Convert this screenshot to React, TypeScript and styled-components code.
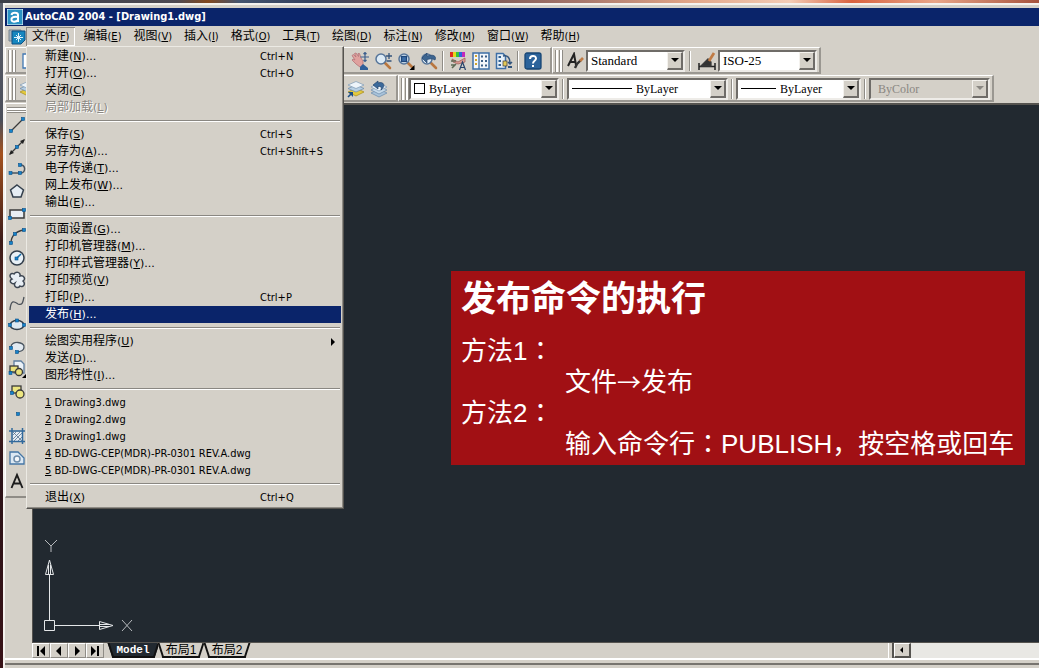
import React from "react";
import styled, { createGlobalStyle } from "styled-components";

const face = "#d4d0c8";
const uiFont = `"DejaVu Sans Condensed", "Noto Sans CJK SC", sans-serif`;

const GlobalStyle = createGlobalStyle`
  * { box-sizing: border-box; }
  body { margin: 0; background: ${face}; font-family: ${uiFont}; font-size: 11px; color: #000; }
  button, select { font: inherit; color: inherit; border: 0; margin: 0; padding: 0; background: none; }
  svg { display: block; flex: none; }
`;

const Desktop = styled.div`
  min-height: 100vh;
  display: flex;
  padding: 3px 0 0 3px;
  background:
    linear-gradient(90deg, #3c3f48 0, #4d4a52 17%, #83481f 20%, #44546f 23%, #33405c 30%, #6b4a4a 42%, #a8786c 56%, #e0a487 66%, #f4cdb6 76%, #d9623f 82%, #e9a689 90%, #a5523d 100%) 0 0 / 100% 3px no-repeat,
    linear-gradient(#5b606c 0, #4b4f5a 18%, #a4521f 23%, #3d1c1a 36%, #642d22 52%, #2c1318 70%, #381217 100%);
`;

const Window = styled.div`
  flex: 1;
  min-width: 0;
  display: flex;
  flex-direction: column;
  background: ${face};
  border-top: 2px solid #f4f2ee;
  border-left: 2px solid #f4f2ee;
  padding-top: 3px;
`;

const TitleBar = styled.header`
  height: 18px;
  display: flex;
  align-items: center;
  gap: 2px;
  padding-left: 2px;
  background: #0a246a;
  color: #fff;
`;

const Title = styled.h1`
  margin: 0;
  font: bold 11px ${uiFont};
  line-height: 18px;
`;

const MenuBar = styled.nav`
  height: 21px;
  display: flex;
  align-items: center;
  padding-left: 3px;
`;

const MenuTitle = styled.button<{ $open?: boolean }>`
  height: 19px;
  padding: 0 6px;
  white-space: nowrap;
  line-height: 19px;
  box-shadow: ${(p) => (p.$open ? "inset 1px 1px #8c8984, inset -1px -1px #fff" : "none")};
`;

const Cjk = styled.span`
  font-size: 12px;
`;

const Access = styled.span``;

const MenuHost = styled.div`
  position: relative;
  margin-right: 2px;
`;

const Menu = styled.div`
  position: absolute;
  z-index: 5;
  top: 19px;
  left: 0;
  width: 318px;
  padding: 1px 2px 2px;
  background: ${face};
  border: 1px solid #eceae4;
  border-right-color: #55534f;
  border-bottom-color: #55534f;
  box-shadow: inset -1px -1px #8f8c86;
  ${Access} { font-family: "DejaVu Sans", sans-serif; }
`;

const MenuRow = styled.button<{ $active?: boolean; $disabled?: boolean }>`
  width: 100%;
  height: 17px;
  display: flex;
  align-items: center;
  padding-left: 16px;
  text-align: left;
  white-space: nowrap;
  line-height: 17px;
  background: ${(p) => (p.$active ? "#0a246a" : "transparent")};
  color: ${(p) => (p.$active ? "#fff" : p.$disabled ? "#8a8782" : "#000")};
  text-shadow: ${(p) => (p.$disabled ? "1px 1px #fff" : "none")};
`;

const RowText = styled.span`
  width: 215px;
`;

const RowKey = styled.span`
  flex: 1;
`;

const MenuLine = styled.hr`
  height: 2px;
  margin: 4px 1px;
  border: 0;
  border-top: 1px solid #8a8782;
  border-bottom: 1px solid #fff;
`;

const BarRow = styled.div`
  height: 28px;
  display: flex;
`;

const Toolbar = styled.div<{ $tail?: number }>`
  height: 27px;
  display: flex;
  align-items: center;
  padding: 1px ${(p) => p.$tail ?? 6}px 0 2px;
  border: 1px solid #fff;
  border-right: 2px solid #9a9791;
  border-bottom: 2px solid #9a9791;
`;

const Grip = styled.span`
  width: 8px;
  height: 22px;
  flex: none;
  border: solid #8f8c86;
  border-width: 0 1px;
  background: linear-gradient(90deg, #fff 0 2px, ${face} 2px 3px, #8f8c86 3px 4px, #fff 4px 6px);
`;

const Rule = styled.span<{ $gap?: number }>`
  width: 2px;
  height: 20px;
  flex: none;
  margin: 0 ${(p) => p.$gap ?? 3}px;
  border-left: 1px solid #8f8c86;
  border-right: 1px solid #fff;
`;

const ToolButton = styled.button`
  width: 23px;
  height: 22px;
  flex: none;
  display: grid;
  place-items: center;
`;

const Covered = styled.div<{ $w: number }>`
  width: ${(p) => p.$w}px;
  display: flex;
  flex: none;
`;

const ComboFrame = styled.div<{ $w: number; $size: number; $off?: boolean }>`
  width: ${(p) => p.$w}px;
  height: 22px;
  flex: none;
  display: flex;
  align-items: center;
  gap: 4px;
  padding: 0 0 0 3px;
  border: 2px solid #6f6c68;
  border-right-color: #eeece8;
  border-bottom-color: #eeece8;
  background: ${(p) => (p.$off ? face : "#fff")};
  color: ${(p) => (p.$off ? "#8a8782" : "#000")};
  font: ${(p) => p.$size}px "Liberation Serif", serif;
`;

const Picker = styled.select`
  flex: 1;
  min-width: 0;
  height: 18px;
  appearance: none;
  opacity: 1;
`;

const DropArrow = styled.span<{ $off?: boolean }>`
  width: 16px;
  height: 18px;
  flex: none;
  display: grid;
  place-items: center;
  background: ${face};
  border: 1px solid #f4f2ee;
  border-right: 2px solid #6f6c68;
  border-bottom: 2px solid #6f6c68;
  &::after {
    content: "";
    border: 4px solid transparent;
    border-top-color: ${(p) => (p.$off ? "#8a8782" : "#000")};
    border-bottom: 0;
  }
`;

const Swatch = styled.span`
  width: 11px;
  height: 11px;
  flex: none;
  border: 1px solid #000;
`;

const LineSample = styled.span<{ $w: number }>`
  width: ${(p) => p.$w}px;
  height: 1px;
  flex: none;
  background: #000;
`;

const Work = styled.div`
  flex: 1;
  display: flex;
`;

const Side = styled.div`
  width: 27px;
  flex: none;
`;

const Palette = styled.div`
  padding: 3px 0 4px;
  display: flex;
  flex-direction: column;
  gap: 1px;
  border: 1px solid #fff;
  border-bottom: 2px solid #8f8c86;
`;

const PaletteGrip = styled.span`
  height: 6px;
  margin: 0 1px;
  border-top: 1px solid #8f8c86;
  border-bottom: 1px solid #8f8c86;
  background: linear-gradient(#fff 0 2px, #8f8c86 2px 3px, #fff 3px);
`;

const PaletteTool = styled.button`
  width: 22px;
  height: 22px;
  display: grid;
  place-items: center;
`;

const View = styled.div`
  flex: 1;
  min-width: 0;
  display: flex;
  flex-direction: column;
`;

const Canvas = styled.main`
  position: relative;
  flex: 1;
  background: #222930;
  border-top: 2px solid #55534f;
  border-left: 1px solid #55534f;
`;

const Ucs = styled.svg`
  position: absolute;
  left: 8px;
  bottom: 8px;
`;

const Callout = styled.section`
  position: absolute;
  top: 166px;
  left: 418px;
  width: 574px;
  padding: 0 10px 5px;
  background: #a11014;
  color: #fff;
  font: 26px "Liberation Sans", "Noto Sans CJK SC", sans-serif;
  line-height: 31px;
  white-space: nowrap;
  h2 { margin: 0; font-size: 35px; font-weight: bold; line-height: 55px; padding-bottom: 10px; }
  p { margin: 0; }
`;

const Step = styled.p`
  && { padding-left: 104px; }
`;

const Colon = styled.span`
  font-family: "Noto Sans CJK TC", sans-serif;
  line-height: 0;
`;

const Arrow = styled.span`
  font-family: "Noto Sans CJK SC", sans-serif;
  font-size: 24px;
  line-height: 0;
`;

const TabStrip = styled.div`
  height: 16px;
  display: flex;
  border-top: 1px solid #55534f;
`;

const NavButton = styled.button`
  width: 18px;
  display: grid;
  place-items: center;
  border: 1px solid #fff;
  border-right-color: #8f8c86;
  border-bottom-color: #8f8c86;
`;

const Tab = styled.button<{ $on?: boolean; $w: number }>`
  position: relative;
  z-index: 0;
  width: ${(p) => p.$w}px;
  height: 15px;
  padding-bottom: 2px;
  line-height: 12px;
  color: ${(p) => (p.$on ? "#fff" : "#000")};
  font-family: ${(p) => (p.$on ? `"Liberation Mono", monospace` : `"Liberation Sans", "Noto Sans CJK SC", sans-serif`)};
  font-size: ${(p) => (p.$on ? 11 : 12)}px;
  font-weight: ${(p) => (p.$on ? "bold" : "normal")};
  &::before, &::after {
    content: "";
    position: absolute;
    z-index: -1;
    inset: 0 35% 0 2px;
    background: ${(p) => (p.$on ? "#222930" : face)};
    border-left: 2px solid #111;
    border-bottom: 2px solid #111;
    transform: skewX(18deg);
  }
  &::after {
    inset: 0 2px 0 35%;
    border-left: 0;
    border-right: 2px solid #111;
    transform: skewX(-18deg);
  }
`;

const Tabs = styled.div`
  flex: 1;
  display: flex;
  padding-left: 4px;
`;

const Scroller = styled.div`
  width: 151px;
  display: flex;
  background: #e9e8e4;
`;

const Splitter = styled.span`
  width: 6px;
  background: ${face};
  border-left: 1px solid #fff;
  border-right: 2px solid #55534f;
`;

const ScrollButton = styled(NavButton)`
  width: 17px;
  background: ${face};
  border-right: 2px solid #55534f;
  border-bottom: 2px solid #55534f;
`;

const CommandEdge = styled.footer`
  height: 10px;
  border-top: 2px solid #fff;
  background: linear-gradient(${face} 0 3px, #77746f 3px 5px, ${face} 5px);
`;

type Entry = { t?: string; l?: string; k?: string; s?: string; sub?: boolean; off?: boolean; on?: boolean };
const groups: Entry[][] = [
  [{ t: "新建", k: "N", s: "Ctrl+N", l: "..." }, { t: "打开", k: "O", s: "Ctrl+O", l: "..." }, { t: "关闭", k: "C" }, { t: "局部加载", k: "L", off: true }],
  [{ t: "保存", k: "S", s: "Ctrl+S" }, { t: "另存为", k: "A", s: "Ctrl+Shift+S", l: "..." }, { t: "电子传递", k: "T", l: "..." }, { t: "网上发布", k: "W", l: "..." }, { t: "输出", k: "E", l: "..." }],
  [{ t: "页面设置", k: "G", l: "..." }, { t: "打印机管理器", k: "M", l: "..." }, { t: "打印样式管理器", k: "Y", l: "..." }, { t: "打印预览", k: "V" }, { t: "打印", k: "P", s: "Ctrl+P", l: "..." }, { t: "发布", k: "H", l: "...", on: true }],
  [{ t: "绘图实用程序", k: "U", sub: true }, { t: "发送", k: "D", l: "..." }, { t: "图形特性", k: "I", l: "..." }],
  [{ k: "1", l: " Drawing3.dwg" }, { k: "2", l: " Drawing2.dwg" }, { k: "3", l: " Drawing1.dwg" }, { k: "4", l: " BD-DWG-CEP(MDR)-PR-0301 REV.A.dwg" }, { k: "5", l: " BD-DWG-CEP(MDR)-PR-0301 REV.A.dwg" }],
  [{ t: "退出", k: "X", s: "Ctrl+Q" }],
];

const menus: [string, string][] = [["编辑", "E"], ["视图", "V"], ["插入", "I"], ["格式", "O"], ["工具", "T"], ["绘图", "D"], ["标注", "N"], ["修改", "M"], ["窗口", "W"], ["帮助", "H"]];

const Label = ({ t, k, l }: Entry) =>
  t ? (
    <><Cjk>{t}</Cjk><Access>(<u>{k}</u>){l}</Access></>
  ) : (
    <><u>{k}</u>{l}</>
  );

const FileMenu = () => (
  <Menu role="menu">
    {groups.map((g, i) => (
      <React.Fragment key={i}>
        {i > 0 && <MenuLine />}
        {g.map((e) => (
          <MenuRow key={e.k} role="menuitem" $active={e.on} $disabled={e.off}>
            <RowText><Label {...e} /></RowText>
            <RowKey>{e.s}</RowKey>
            {e.sub && <svg width="11" height="8"><path d="M1 0L5 4L1 8Z" /></svg>}
          </MenuRow>
        ))}
      </React.Fragment>
    ))}
  </Menu>
);

const Combo = ({ w, label, value, size = 12, off, lead }: { w: number; label: string; value: string; size?: number; off?: boolean; lead?: React.ReactNode }) => (
  <ComboFrame $w={w} $size={size} $off={off}>
    {lead}
    <Picker aria-label={label} disabled={off}><option>{value}</option></Picker>
    <DropArrow $off={off} />
  </ComboFrame>
);

const Icon = ({ children, s = 18 }: { children: React.ReactNode; s?: number }) => (
  <svg width={s} height={s} viewBox="0 0 18 18" fill="none" stroke="#3a3a3a" strokeWidth="1.3">{children}</svg>
);

const dot = (x: number, y: number) => <rect key={`${x}-${y}`} x={x - 1.5} y={y - 1.5} width="3" height="3" fill="#1583c9" stroke="#0a4f8a" strokeWidth=".6" />;

const lens = (
  <>
    <path d="M11 11L16 16" stroke="#b9773f" strokeWidth="2.6" strokeLinecap="round" />
    <circle cx="7" cy="7" r="5" fill="#dceaf5" stroke="#56759a" strokeWidth="1.5" />
  </>
);

const sheets = (
  <>
    <path d="M1 12L9 8L17 12L9 16Z" fill="#e3c93d" stroke="#a58a1c" strokeWidth=".7" />
    <path d="M1 8.500L9 5L17 8.500L9 12Z" fill="#b7cfe3" stroke="#6b8bab" strokeWidth=".7" />
    <path d="M1 5L9 1.500L17 5L9 8.500Z" fill="#edf4fa" stroke="#7c99b5" strokeWidth=".7" />
  </>
);

const blueSheets = (
  <>
    <path d="M1 13L9 9L17 13L9 17Z" fill="#a9c3da" stroke="#6b8bab" strokeWidth=".7" />
    <path d="M1 10L9 6L17 10L9 14Z" fill="#c8dbea" stroke="#6b8bab" strokeWidth=".7" />
    <path d="M1 7L9 3L17 7L9 11Z" fill="#edf4fa" stroke="#7c99b5" strokeWidth=".7" />
  </>
);

const standardTools: [string, React.ReactNode][] = [
  ["平移", <><path d="M1 3.500L2.500 2.500L5 5L3.500 1.500L5 1L7.500 4.500L7 1.500L8.500 1.500L10 6L12 9L12 13L9 15L5 12L1 8L2 7L4 8Z" fill="#dfa19e" stroke="#b47478" strokeWidth=".8" /><path d="M9 15L12 12L17 16V18H9Z" fill="#2e5f9a" stroke="none" /><path d="M14 .5V9.500M9.500 5H18M12.500 2L14 .5L15.500 2M12.500 8L14 9.500L15.500 8" stroke="#3c5f8e" strokeWidth="1.2" /></>],
  ["实时缩放", <>{lens}<path d="M15 1V7M12 4H18M12.500 9H17.500" stroke="#34547c" /></>],
  ["窗口缩放", <>{lens}<rect x="4.500" y="4.500" width="5" height="5" fill="#3d6ea7" stroke="#1f477b" /><path d="M17.500 13V18H12.500Z" fill="#000" stroke="none" /></>],
  ["上一个", <>{lens}<path d="M2 6L7 1V4C13 2 17 4 15 8C12 6 10 7 7 7.500V11Z" fill="#3d6590" stroke="#25466f" strokeWidth=".7" /></>],
];

const dataTools: [string, React.ReactNode][] = [
  ["特性", <><path d="M1 2.500H4" stroke="#e02b22" strokeWidth="5" /><path d="M4 2.500H7" stroke="#e6d51d" strokeWidth="5" /><path d="M7 2.500H10" stroke="#35c13e" strokeWidth="5" /><path d="M10 2.500H13" stroke="#2e62e0" strokeWidth="5" /><path d="M13 2.500H16" stroke="#c328bb" strokeWidth="5" /><path d="M3 7L9 10L16 6V10L9 12L4 10Z" fill="#dd9d94" stroke="#a0605c" strokeWidth=".8" /><path d="M2 9H7M2 13H6M3 16L7 12" stroke="#5c6a55" strokeWidth="1.600" /><path d="M10.500 18L13.500 10L16.500 18M11.500 15.500H15.500" stroke="#28436b" strokeWidth="1.200" /></>],
  ["设计中心", <><rect x="1" y="1" width="16" height="16" fill="#f4f6fa" stroke="#3e6fa6" strokeWidth="1.500" /><path d="M7 1V17" stroke="#3e6fa6" /><path d="M3 4H5M3 8H5M3 12H5" stroke="#d0a42d" strokeWidth="2" /><path d="M9 4.500H11M13 4.500H15M9 9H11M13 9H15M9 13.500H11M13 13.500H15" stroke="#3d5f86" strokeWidth="2.200" /></>],
  ["工具选项板", <><path d="M1.500 1.500H8L10.500 4V16.500H1.500Z" fill="#e7f0f8" stroke="#3e6fa6" strokeWidth="1.500" /><path d="M3.500 5H6M3.500 9H6M3.500 13H6" stroke="#326294" strokeWidth="2.200" /><path d="M8 4C13 3 15 6 15 11M13 10L15 12L17 10" stroke="#31547c" strokeWidth="1.500" /><rect x="8" y="9" width="4" height="5" fill="#e3ca58" strokeWidth=".7" /><path d="M13 15H17" stroke="#31547c" strokeWidth="2" /></>],
];

const palette: [string, React.ReactNode][][] = [
  [
    ["直线", <><path d="M3 15L15 3" />{dot(3, 15)}{dot(15, 3)}</>],
    ["构造线", <><path d="M2 16L16 2" /><path d="M1 17L3 12L6 15ZM17 1L12 3L15 6Z" fill="#222" stroke="none" />{dot(9, 9)}</>],
    ["多段线", <><path d="M2 13H12M12 5C18 4 18 13 13 13" stroke="#4a5560" strokeWidth="1.500" />{dot(2.500, 13)}{dot(12, 5)}{dot(12, 13)}</>],
    ["正多边形", <path d="M9 3L15.500 8L13 15H5L2.500 8Z" fill="#e6edf3" stroke="#333f4c" strokeWidth="1.500" />],
  ],
  [
    ["矩形", <><rect x="2" y="5" width="14" height="8" fill="#e9eef4" strokeWidth="1.500" />{dot(2, 13)}{dot(16, 5)}</>],
    ["圆弧", <><path d="M3 16C3 9 8 4 16 3" />{dot(3, 16)}{dot(7, 7)}{dot(16, 3)}</>],
    ["圆", <><circle cx="9" cy="9" r="7" fill="#e8f0f6" stroke="#333f4c" strokeWidth="1.500" /><path d="M9 9L13 5" stroke="#176fab" strokeWidth="1.600" />{dot(8.500, 9.500)}</>],
    ["修订云线", <path d="M4 8C0 5 3 1 6 3C8 0 13 1 12 5C16 4 18 8 15 10C18 13 15 17 12 15C10 18 5 16 7 12C4 14 0 10 4 8Z" fill="#e8eef4" stroke="#3d4652" strokeWidth="1.500" />],
  ],
  [
    ["样条曲线", <path d="M2 16C3 3 8 9 10 10C15 12 15 7 16 3" stroke="#4a5058" />],
    ["椭圆", <><ellipse cx="9" cy="9" rx="7" ry="4.500" fill="#dce8f1" stroke="#333f4c" strokeWidth="1.500" />{dot(2, 9)}{dot(16, 9)}{dot(9, 4.500)}</>],
    ["椭圆弧", <><path d="M3 9C3 2 17 4 16 9C16 13 11 14 8 14" fill="#e2eaf1" stroke="#4a5560" />{dot(3, 10)}{dot(9, 14)}</>],
    ["插入块", <><path d="M6 1H13L16 4V13H6Z" fill="#eaf1f7" stroke="#5d7d9e" /><rect x="2" y="6" width="8" height="6" fill="#e9e07b" /><circle cx="11" cy="12" r="3.500" fill="#e9e07b" />{dot(2.500, 13)}<path d="M18 14V18H14Z" fill="#000" stroke="none" /></>],
  ],
  [
    ["创建块", <><rect x="4" y="3" width="9" height="7" fill="#ede680" /><circle cx="12" cy="11" r="4" fill="#ede680" />{dot(4, 10)}</>],
    ["点", dot(10, 9)],
    ["图案填充", <><path d="M5 5H14V14H5Z" fill="#e6edf3" stroke="none" /><path d="M5 8L8 5M5 12L12 5M6 14L14 6M10 14L14 10M5 5L14 14" stroke="#55728f" strokeWidth=".8" /><path d="M4 1V17M14.500 1V17M1 4H17M1 14.500H17" stroke="#31699c" strokeWidth="1.500" /></>],
    ["面域", <><path d="M2 3H10L16 9V15H2Z" fill="#dce8f3" stroke="#4476a5" /><circle cx="9" cy="10" r="3" fill="#f5f7fa" stroke="#6d8caa" strokeWidth="1.500" /></>],
  ],
  [["多行文字", <path d="M3.500 16L9 3L14.500 16M5.500 11.500H12.500" stroke="#1c1c1c" strokeWidth="1.900" />]],
];

export default function App() {
  return (
    <>
      <GlobalStyle />
      <Desktop>
        <Window>
          <TitleBar>
            <svg width="16" height="16" viewBox="0 0 16 16">
              <rect width="16" height="16" fill="#2a93c4" stroke="#fff" />
              <path d="M4.500 6C5 3 11 3 11 6V13M11 8C6 7 4 9 4.500 11C5 13.500 9 13 11 11" fill="none" stroke="#fff" strokeWidth="2" />
            </svg>
            <Title>AutoCAD 2004 - [Drawing1.dwg]</Title>
          </TitleBar>
          <MenuBar aria-label="菜单">
            <svg width="18" height="18" viewBox="0 0 18 18">
              <path d="M1 2H13V13H1Z" fill="#a6b4c0" stroke="#77848f" />
              <path d="M4 3H17V12L13 16H4Z" fill="#1787bf" stroke="#0c4f83" />
              <path d="M10.500 5V14M6 9.500H15M8 7L13 12M13 7L8 12" stroke="#dff2fc" />
            </svg>
            <MenuHost>
              <MenuTitle $open aria-haspopup="menu" aria-expanded="true"><Label t="文件" k="F" /></MenuTitle>
              <FileMenu />
            </MenuHost>
            {menus.map(([t, k]) => <MenuTitle key={k} aria-haspopup="menu"><Label t={t} k={k} /></MenuTitle>)}
          </MenuBar>

          <BarRow>
            <Toolbar>
              <Grip />
              <Covered $w={332}>
                <ToolButton aria-label="新建图形"><Icon><path d="M4 2H12L15 5V16H4Z" fill="#fff" stroke="#4178b3" /></Icon></ToolButton>
              </Covered>
              {standardTools.map(([n, d]) => <ToolButton key={n} aria-label={n}><Icon>{d}</Icon></ToolButton>)}
              <Rule $gap={2} />
              {dataTools.map(([n, d]) => <ToolButton key={n} aria-label={n}><Icon>{d}</Icon></ToolButton>)}
              <Rule $gap={2} />
              <ToolButton aria-label="帮助">
                <Icon><rect x="1" y="1" width="16" height="16" rx="2" fill="#2b639b" stroke="#174674" /><path d="M6 7C6 3 12 3 12 6.500C12 9 9 8.500 9 11.500M9 13V15" stroke="#fff" strokeWidth="2" /></Icon>
              </ToolButton>
            </Toolbar>
            <Toolbar $tail={2}>
              <Grip />
              <ToolButton aria-label="文字样式">
                <Icon><path d="M2 14L8 2L10 13M4 10H10" stroke="#222" strokeWidth="2" /><path d="M9 16L11 12L15 8" stroke="#333" strokeWidth="2.400" /><path d="M14 9L17 6" stroke="#c07b45" strokeWidth="2.600" /></Icon>
              </ToolButton>
              <Combo w={99} label="文字样式" value="Standard" size={13} />
              <Rule $gap={4} />
              <ToolButton aria-label="标注样式">
                <Icon><path d="M1 11V18M17 11V18M1 14.500H17" stroke="#222" strokeWidth="1.500" /><path d="M3 14L10 7L13 10V14Z" fill="#333" /><path d="M11 9L16 1" stroke="#c07b45" strokeWidth="2.800" /></Icon>
              </ToolButton>
              <Combo w={99} label="标注样式" value="ISO-25" size={13} />
            </Toolbar>
          </BarRow>

          <BarRow>
            <Toolbar>
              <Grip />
              <Covered $w={328}>
                <ToolButton aria-label="图层特性管理器"><Icon>{sheets}</Icon></ToolButton>
              </Covered>
              <ToolButton aria-label="将对象的图层置为当前"><Icon>{sheets}<path d="M1 12H6V17Z" fill="#1c4f86" stroke="none" /><path d="M1 17L5 13" stroke="#1c4f86" strokeWidth="1.600" /></Icon></ToolButton>
              <ToolButton aria-label="上一个图层"><Icon>{blueSheets}<path d="M3 5L8 1V3C14 1 16 6 11 10C12 7 11 6 8 6.500V9Z" fill="#3c6a9b" stroke="#25466f" strokeWidth=".7" /></Icon></ToolButton>
            </Toolbar>
            <Toolbar $tail={2}>
              <Grip />
              <Combo w={150} label="颜色" value="ByLayer" lead={<Swatch />} />
              <Rule />
              <Combo w={161} label="线型" value="ByLayer" lead={<LineSample $w={60} />} />
              <Rule />
              <Combo w={125} label="线宽" value="ByLayer" lead={<LineSample $w={35} />} />
              <Rule />
              <Combo w={121} label="打印样式" value="ByColor" off lead={<span />} />
            </Toolbar>
          </BarRow>

          <Work>
            <Side>
              <Palette aria-label="绘图">
                <PaletteGrip />
                {palette.map((g, i) => (
                  <div key={i}>
                    {g.map(([n, d]) => <PaletteTool key={n} aria-label={n}><Icon>{d}</Icon></PaletteTool>)}
                  </div>
                ))}
              </Palette>
            </Side>
            <View>
              <Canvas>
                <Callout>
                  <h2>发布命令的执行</h2>
                  <p>方法1<Colon>：</Colon></p>
                  <Step>文件<Arrow>→</Arrow>发布</Step>
                  <p>方法2<Colon>：</Colon></p>
                  <Step>输入命令行<Colon>：</Colon>PUBLISH，按空格或回车</Step>
                </Callout>
                <Ucs width="96" height="96" viewBox="0 0 96 96" fill="none" stroke="#e4e6e8" aria-label="UCS">
                  <path d="M3.500 82.500H13.500V92.500H3.500ZM8.500 82V36M8.500 22L4.500 36.500H12.500ZM7.500 27V36M9.500 27V36M14 87.500H58M58.500 83.500V91.500L72 87.500ZM59 86.500H68M59 88.500H68" />
                  <path d="M4 2L10 8L16 2M10 8V14M81 82L91 93M91 82L81 93" stroke="#b7babd" />
                </Ucs>
              </Canvas>
              <TabStrip>
                <NavButton aria-label="第一个"><svg width="10" height="10"><path d="M1 0H3V10H1ZM9 0V10L4 5Z" /></svg></NavButton>
                <NavButton aria-label="上一个布局"><svg width="10" height="10"><path d="M7 0V10L2 5Z" /></svg></NavButton>
                <NavButton aria-label="下一个布局"><svg width="10" height="10"><path d="M3 0V10L8 5Z" /></svg></NavButton>
                <NavButton aria-label="最后一个"><svg width="10" height="10"><path d="M1 0V10L6 5ZM7 0H9V10H7Z" /></svg></NavButton>
                <Tabs>
                  <Tab $on $w={50}>Model</Tab>
                  <Tab $w={46}>布局1</Tab>
                  <Tab $w={46}>布局2</Tab>
                </Tabs>
                <Scroller>
                  <Splitter />
                  <ScrollButton aria-label="向左滚动"><svg width="6" height="6"><path d="M4 0V6L1 3Z" /></svg></ScrollButton>
                </Scroller>
              </TabStrip>
            </View>
          </Work>
          <CommandEdge />
        </Window>
      </Desktop>
    </>
  );
}
